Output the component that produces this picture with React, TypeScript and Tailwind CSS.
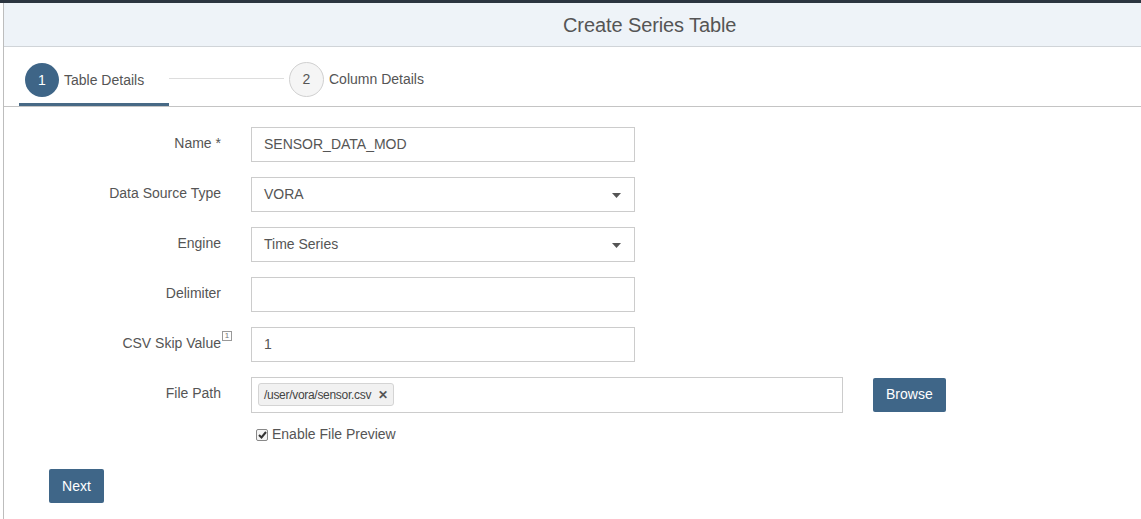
import React from "react";

const font = { fontFamily: '"Liberation Sans", Arial, sans-serif' };

function Caret() {
  return (
    <svg width="9" height="5" viewBox="0 0 9 5" className="absolute right-[13px] top-[15px]">
      <path d="M0 0 L9 0 L4.5 5 Z" fill="#555" />
    </svg>
  );
}

function Row({ label, children, sup }: { label: string; children: React.ReactNode; sup?: boolean }) {
  return (
    <div className="flex items-center h-[35px]">
      <div className="w-[217px] text-right text-[14px] text-[#555] flex justify-end items-start -mt-[2px]">
        <span className="relative">
          {label}
          {sup && (
            <span className="absolute left-full top-[-2px] ml-[1px] inline-flex items-center justify-center w-[10px] h-[10px] border border-[#999] text-[8px] leading-none text-[#777]">
              1
            </span>
          )}
        </span>
      </div>
      <div className="ml-[30px] flex items-center">{children}</div>
    </div>
  );
}

function Box({ children, select, w = 384 }: { children?: React.ReactNode; select?: boolean; w?: number }) {
  return (
    <div
      className="relative h-[35px] border border-[#ccc] bg-white flex items-center px-[12px] text-[14px] text-[#555]"
      style={{ width: w }}
    >
      {children}
      {select && <Caret />}
    </div>
  );
}

export default function App() {
  return (
    <div style={font} className="w-[1141px] h-[519px] bg-white overflow-hidden relative">
      <div className="h-[3px] bg-[#2c3540]" />
      <div className="flex h-[516px]">
        <div className="w-[3px] bg-white" />
        <div className="w-[1px] bg-[#bdbdbd]" />
        <div className="flex-1 flex flex-col">
          <div className="h-[44px] bg-[#eef3f8] border-b border-[#d0d4d8] flex items-center">
            <div className="ml-[559px] text-[20px] text-[#555] tracking-[-0.1px]">Create Series Table</div>
          </div>
          <div className="h-[60px] border-b border-[#c4c4c4] flex items-end pl-[15px] relative">
            <div className="flex items-center h-[57px] relative">
              <div className="flex items-center pl-[6px] pr-[24px] h-full border-b-[3px] border-[#476985] w-[150px]">
                <div className="w-[34px] h-[34px] rounded-full bg-[#3e6587] text-white text-[14px] flex items-center justify-center mt-[8px]">1</div>
                <span className="ml-[5px] text-[14px] text-[#555] mt-[8px]">Table Details</span>
              </div>
              <div className="w-[115px] h-[1px] bg-[#ddd] mt-[2px]" />
              <div className="flex items-center ml-[5px] mt-[3px]">
                <div className="w-[35px] h-[35px] rounded-full bg-[#f5f5f5] border border-[#d0d0d0] text-[#555] text-[14px] flex items-center justify-center">2</div>
                <span className="ml-[5px] text-[14px] text-[#555]">Column Details</span>
              </div>
            </div>
          </div>
          <div className="flex flex-col pt-[20px] gap-[15px]">
            <Row label="Name *">
              <Box>SENSOR_DATA_MOD</Box>
            </Row>
            <Row label="Data Source Type">
              <Box select>VORA</Box>
            </Row>
            <Row label="Engine">
              <Box select>Time Series</Box>
            </Row>
            <Row label="Delimiter">
              <Box />
            </Row>
            <Row label="CSV Skip Value" sup>
              <Box>1</Box>
            </Row>
            <Row label="File Path">
              <div className="flex items-center">
                <div className="h-[36px] w-[592px] border border-[#ccc] bg-white flex items-center px-[6px]">
                  <div className="h-[23px] flex items-center px-[5px] bg-[#f1f1f1] border border-[#d4d4d4] rounded-[3px] text-[12px] text-[#444] tracking-[-0.3px]">
                    /user/vora/sensor.csv
                    <span className="ml-[7px] text-[12px] font-bold text-[#555]">✕</span>
                  </div>
                </div>
                <button className="ml-[30px] h-[34px] px-[13px] bg-[#3f6688] text-white text-[14px] rounded-[2px]">Browse</button>
              </div>
            </Row>
          </div>
          <div className="ml-[252px] mt-[12px] flex items-center text-[14px] text-[#555]">
            <span className="w-[12px] h-[12px] border border-[#888] rounded-[2px] bg-[#f4f4f4] flex items-center justify-center">
              <svg width="9" height="8" viewBox="0 0 9 8">
                <path d="M1 4 L3.5 6.5 L8 1" stroke="#333" strokeWidth="2" fill="none" />
              </svg>
            </span>
            <span className="ml-[4px]">Enable File Preview</span>
          </div>
          <div className="ml-[45px] mt-[24px]">
            <button className="h-[34px] w-[55px] bg-[#3f6688] text-white text-[14px] rounded-[2px]">Next</button>
          </div>
        </div>
      </div>
    </div>
  );
}
